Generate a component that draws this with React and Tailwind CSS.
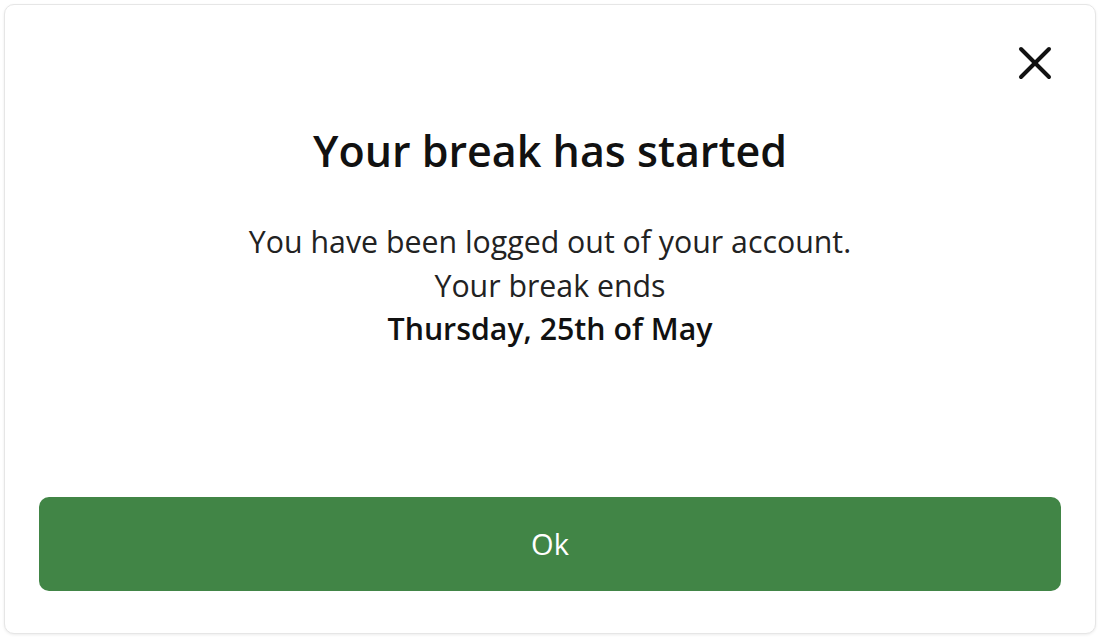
import React from 'react';

// Break-started notice: a single card with close button, message and Ok action
export default function App() {
  return (
    <div className="w-[1100px] h-[638px] bg-white p-1 font-['Open_Sans',sans-serif]">
      <div className="relative flex flex-col h-[630px] w-[1092px] rounded-[10px] border border-[#e6e6e6] shadow-[0_1px_3px_rgba(0,0,0,0.08)] bg-white">
        {/* Close icon */}
        <button className="absolute top-[41px] right-[43px] w-[34px] h-[34px] flex items-center justify-center text-[#111]">
          <svg width="34" height="34" viewBox="0 0 34 34" fill="none" stroke="currentColor" strokeWidth="4" strokeLinecap="round">
            <path d="M3 3 L31 31" />
            <path d="M31 3 L3 31" />
          </svg>
        </button>

        <h1 className="mt-[120px] text-center text-[43px] leading-[52px] font-semibold text-[#111]">
          Your break has started
        </h1>

        <div className="mt-[43px] text-center text-[30.3px] leading-[43.5px] text-[#222]">
          <p>You have been logged out of your account.</p>
          <p>Your break ends</p>
          <p className="font-semibold text-[#111]">Thursday, 25th of May</p>
        </div>

        <div className="mt-auto px-[34px] pb-[42px]">
          <button className="w-full h-[94px] rounded-[10px] bg-[#418546] text-white text-[29px] font-medium">
            Ok
          </button>
        </div>
      </div>
    </div>
  );
}
